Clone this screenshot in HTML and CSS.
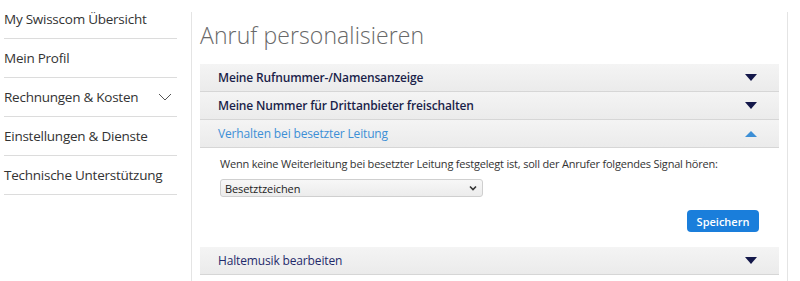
FILE: index.html
```html
<!DOCTYPE html>
<html lang="de">
<head>
    <meta charset="UTF-8">
    <meta name="viewport" content="width=device-width, initial-scale=1.0">
    <title>Anruf personalisieren - My Swisscom</title>
    <link rel="stylesheet" href="styles.css">
</head>
<body>

    <div class="page">
        <!-- Seitennavigation -->
        <nav class="sidebar">
            <a class="nav-item" href="#">My Swisscom Übersicht</a>
            <a class="nav-item" href="#">Mein Profil</a>
            <a class="nav-item has-sub" href="#">
                Rechnungen &amp; Kosten
                <svg class="nav-chevron" width="14" height="8" viewBox="0 0 14 8"><path d="M1 1l6 6 6-6" fill="none" stroke="#555" stroke-width="1"/></svg>
            </a>
            <a class="nav-item" href="#">Einstellungen &amp; Dienste</a>
            <a class="nav-item" href="#">Technische Unterstützung</a>
        </nav>

        <main class="content">
            <h1>Anruf personalisieren</h1>

            <div class="accordion">
                <div class="acc-head">
                    <span>Meine Rufnummer-/Namensanzeige</span>
                    <span class="arrow down"></span>
                </div>
                <div class="acc-head">
                    <span>Meine Nummer für Drittanbieter freischalten</span>
                    <span class="arrow down"></span>
                </div>
                <div class="acc-head open">
                    <span>Verhalten bei besetzter Leitung</span>
                    <span class="arrow up"></span>
                </div>
                <div class="acc-body">
                    <p>Wenn keine Weiterleitung bei besetzter Leitung festgelegt ist, soll der Anrufer folgendes Signal hören:</p>
                    <div class="select">
                        <span>Besetztzeichen</span>
                        <svg width="8" height="6" viewBox="0 0 8 6"><path d="M1 1.5l3 3 3-3" fill="none" stroke="#333" stroke-width="1.6"/></svg>
                    </div>
                    <div class="actions">
                        <button class="btn-save">Speichern</button>
                    </div>
                </div>
                <div class="acc-head">
                    <span class="light">Haltemusik bearbeiten</span>
                    <span class="arrow down"></span>
                </div>
            </div>
        </main>
    </div>

</body>
</html>
```

FILE: styles.css
```css
body {
    margin: 0;
    font-family: 'Open Sans', sans-serif;
    background: #fff;
    color: #333;
}

.page {
    display: flex;
    align-items: flex-start;
    min-height: 281px;
}

/* Seitennavigation */
.sidebar {
    width: 173px;
    margin-left: 4px;
    display: flex;
    flex-direction: column;
}
.nav-item {
    display: flex;
    align-items: center;
    justify-content: space-between;
    height: 38px;
    border-bottom: 1px solid #dcdcdc;
    color: #333;
    text-decoration: none;
    font-size: 13.5px;
    letter-spacing: -0.25px;
}
.nav-chevron {
    margin-right: 5px;
}

/* Inhalt */
.content {
    margin-left: 14px;
    margin-top: 12px;
    width: 597px;
    min-height: 269px;
    border-left: 1px solid #e4e4e4;
    border-right: 1px solid #e4e4e4;
    padding: 0 8px;
    box-sizing: border-box;
}
h1 {
    margin: 8px 0 13px;
    font-size: 23px;
    line-height: 31px;
    font-weight: 300;
    color: #686868;
    letter-spacing: 0.1px;
}

.acc-head {
    display: flex;
    align-items: center;
    justify-content: space-between;
    height: 27px;
    padding: 0 22px 0 18px;
    background: linear-gradient(#f4f4f4, #ebebeb);
    border-bottom: 1px solid #d6d6d6;
    font-size: 12px;
    letter-spacing: -0.15px;
    font-weight: 600;
    color: #1b1f4a;
}
.acc-head.open {
    color: #3d8fd6;
    font-weight: 400;
}
.acc-head .light {
    font-weight: 500;
    color: #1f2a6b;
}
.arrow {
    width: 0;
    height: 0;
    border-left: 6px solid transparent;
    border-right: 6px solid transparent;
}
.arrow.down {
    border-top: 7px solid #14184a;
}
.arrow.up {
    border-bottom: 6px solid #3d8fd6;
}

.acc-body {
    padding: 8px 20px 15px 20px;
}
.acc-body p {
    margin: 0 0 7px;
    font-size: 11px;
    line-height: 16px;
    letter-spacing: -0.2px;
    color: #333;
}
.select {
    width: 263px;
    height: 18px;
    box-sizing: border-box;
    display: flex;
    align-items: center;
    justify-content: space-between;
    padding: 0 5px 0 4px;
    background: linear-gradient(#f7f7f7, #ececec);
    border: 1px solid #cfcfcf;
    border-radius: 3px;
    font-size: 11px;
    letter-spacing: -0.1px;
    color: #222;
}
.actions {
    display: flex;
    justify-content: flex-end;
    margin-top: 13px;
}
.btn-save {
    width: 72px;
    height: 22px;
    border: none;
    border-radius: 4px;
    background: #1a7edb;
    color: #fff;
    font-family: 'Open Sans', sans-serif;
    font-size: 11px;
    font-weight: 600;
    cursor: pointer;
}
```
